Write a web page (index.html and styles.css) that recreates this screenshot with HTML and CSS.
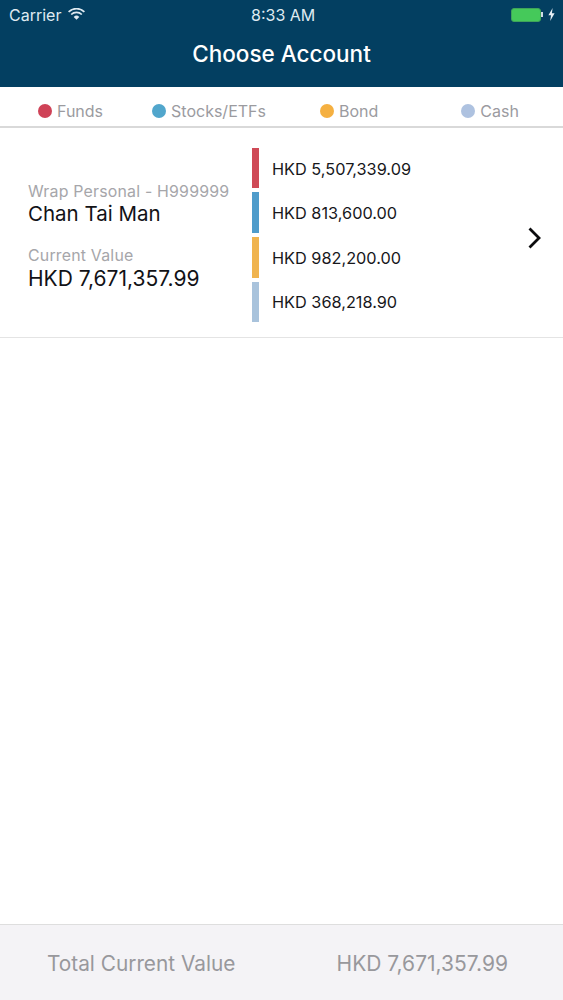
FILE: index.html
```html
<!DOCTYPE html>
<html lang="en">
<head>
    <meta charset="UTF-8">
    <meta name="viewport" content="width=device-width, initial-scale=1.0">
    <title>Choose Account</title>
    <link rel="stylesheet" href="styles.css">
</head>
<body>
    <div class="app">
        <header class="top-bar">
            <div class="status-bar">
                <div class="status-left">
                    <span>Carrier</span>
                    <svg class="wifi" width="17" height="12" viewBox="0 0 17 12">
                        <path d="M0.6 3.9 A11.2 11.2 0 0 1 16.4 3.9" fill="none" stroke="#dfeaf1" stroke-width="1.7"/>
                        <path d="M3.2 6.5 A7.5 7.5 0 0 1 13.8 6.5" fill="none" stroke="#dfeaf1" stroke-width="1.7"/>
                        <path d="M5.7 8.9 A4 4 0 0 1 11.3 8.9 L8.5 11.7 Z" fill="#dfeaf1"/>
                    </svg>
                </div>
                <div class="status-time">8:33 AM</div>
                <div class="status-right">
                    <div class="battery"></div>
                    <div class="battery-tip"></div>
                    <svg class="bolt" width="7" height="13" viewBox="0 0 7 13">
                        <path d="M4.6 0 L0.4 7.3 H3 L2.2 13 L6.6 5.2 H3.9 Z" fill="#e8f0f5"/>
                    </svg>
                </div>
            </div>
            <h1 class="title">Choose Account</h1>
        </header>

        <div class="legend">
            <div class="legend-item funds-item"><span class="dot red"></span>Funds</div>
            <div class="legend-item stocks-item"><span class="dot blue"></span>Stocks/ETFs</div>
            <div class="legend-item bond-item"><span class="dot orange"></span>Bond</div>
            <div class="legend-item cash-item"><span class="dot pale"></span>Cash</div>
        </div>

        <div class="account">
            <div class="account-info">
                <p class="label">Wrap Personal - H999999</p>
                <p class="name">Chan Tai Man</p>
                <p class="label label-gap">Current Value</p>
                <p class="amount">HKD 7,671,357.99</p>
            </div>
            <div class="bars">
                <span class="bar red"></span>
                <span class="bar steel"></span>
                <span class="bar amber"></span>
                <span class="bar pale-bar"></span>
            </div>
            <div class="holdings">
                <div class="holding">HKD 5,507,339.09</div>
                <div class="holding">HKD 813,600.00</div>
                <div class="holding">HKD 982,200.00</div>
                <div class="holding">HKD 368,218.90</div>
            </div>
            <svg class="chevron" width="15" height="24" viewBox="0 0 15 24">
                <path d="M2.5 2.5 L12 12 L2.5 21.5" fill="none" stroke="#0c0c0e" stroke-width="2.8"/>
            </svg>
        </div>

        <div class="spacer"></div>

        <footer class="total">
            <span class="total-label">Total Current Value</span>
            <span class="total-amount">HKD 7,671,357.99</span>
        </footer>
    </div>
</body>
</html>
```

FILE: styles.css
```css
* {
    margin: 0;
    padding: 0;
    box-sizing: border-box;
}

body {
    background: #fff;
    font-family: Inter, "Liberation Sans", sans-serif;
    overflow: hidden;
}

.app {
    height: 1000px;
    display: flex;
    flex-direction: column;
}

.top-bar {
    height: 87px;
    background: #033f61;
    color: #fff;
}

.status-bar {
    height: 29px;
    padding: 0 8px 0 9px;
    display: flex;
    align-items: center;
    justify-content: space-between;
    position: relative;
    font-size: 16px;
    color: #dfeaf1;
}

.status-left {
    display: flex;
    align-items: center;
    gap: 7px;
}

.wifi {
    margin-top: -1px;
}

.status-time {
    position: absolute;
    left: 251px;
    top: 5px;
}

.status-right {
    display: flex;
    align-items: center;
}

.battery {
    width: 30px;
    height: 14px;
    background: #45c95a;
    border: 1px solid #3fa35a;
    border-radius: 3px;
}

.battery-tip {
    width: 2px;
    height: 5px;
    background: #cfdde6;
    margin-right: 5px;
}

.title {
    font-size: 22.5px;
    font-weight: 500;
    text-align: center;
    margin-top: 11px;
    line-height: 28px;
}

.legend {
    height: 41px;
    display: flex;
    align-items: center;
    padding-top: 8px;
    border-bottom: 2px solid #d9d9d9;
    font-size: 16px;
    color: #9b9b9f;
}

.legend-item {
    display: flex;
    align-items: center;
    gap: 5px;
}

.funds-item { margin-left: 38px; }
.stocks-item { margin-left: 49px; }
.bond-item { margin-left: 54px; }
.cash-item { margin-left: 83px; }

.dot {
    width: 14px;
    height: 14px;
    border-radius: 50%;
}

.dot.red { background: #cf4257; }
.dot.blue { background: #51a6cc; }
.dot.orange { background: #f5b041; }
.dot.pale { background: #aec2e0; }

.account {
    height: 210px;
    display: flex;
    align-items: center;
    position: relative;
    border-bottom: 1px solid #e4e4e4;
}

.account-info {
    width: 224px;
    margin-left: 28px;
    padding-top: 10px;
}

.label {
    font-size: 15.9px;
    line-height: 18px;
    color: #a6a6aa;
    letter-spacing: 0.2px;
    white-space: nowrap;
}

.label-gap {
    margin-top: 20px;
}

.name {
    font-size: 20.5px;
    line-height: 26px;
    color: #121216;
    white-space: nowrap;
}

.amount {
    font-size: 21px;
    line-height: 27px;
    color: #121216;
    white-space: nowrap;
}

.bars {
    display: flex;
    flex-direction: column;
    gap: 4.3px;
    margin-top: 5px;
}

.bar {
    width: 7px;
    height: 40.5px;
}

.bar.red { background: #cf4a57; }
.bar.steel { background: #4f9ccb; }
.bar.amber { background: #f0b44f; }
.bar.pale-bar { background: #a9c3dc; }

.holdings {
    display: flex;
    flex-direction: column;
    gap: 3.5px;
    margin-left: 13px;
    margin-top: 6px;
}

.holding {
    height: 41px;
    display: flex;
    align-items: center;
    font-size: 16.3px;
    color: #17171b;
}

.chevron {
    position: absolute;
    right: 21px;
    top: 98px;
}

.spacer {
    flex: 1;
}

.total {
    height: 76px;
    padding: 2px 55px 0 47px;
    display: flex;
    align-items: center;
    justify-content: space-between;
    background: #f4f3f6;
    border-top: 1px solid #dedede;
    color: #98989c;
}

.total-label {
    font-size: 20.8px;
}

.total-amount {
    font-size: 21px;
}
```
